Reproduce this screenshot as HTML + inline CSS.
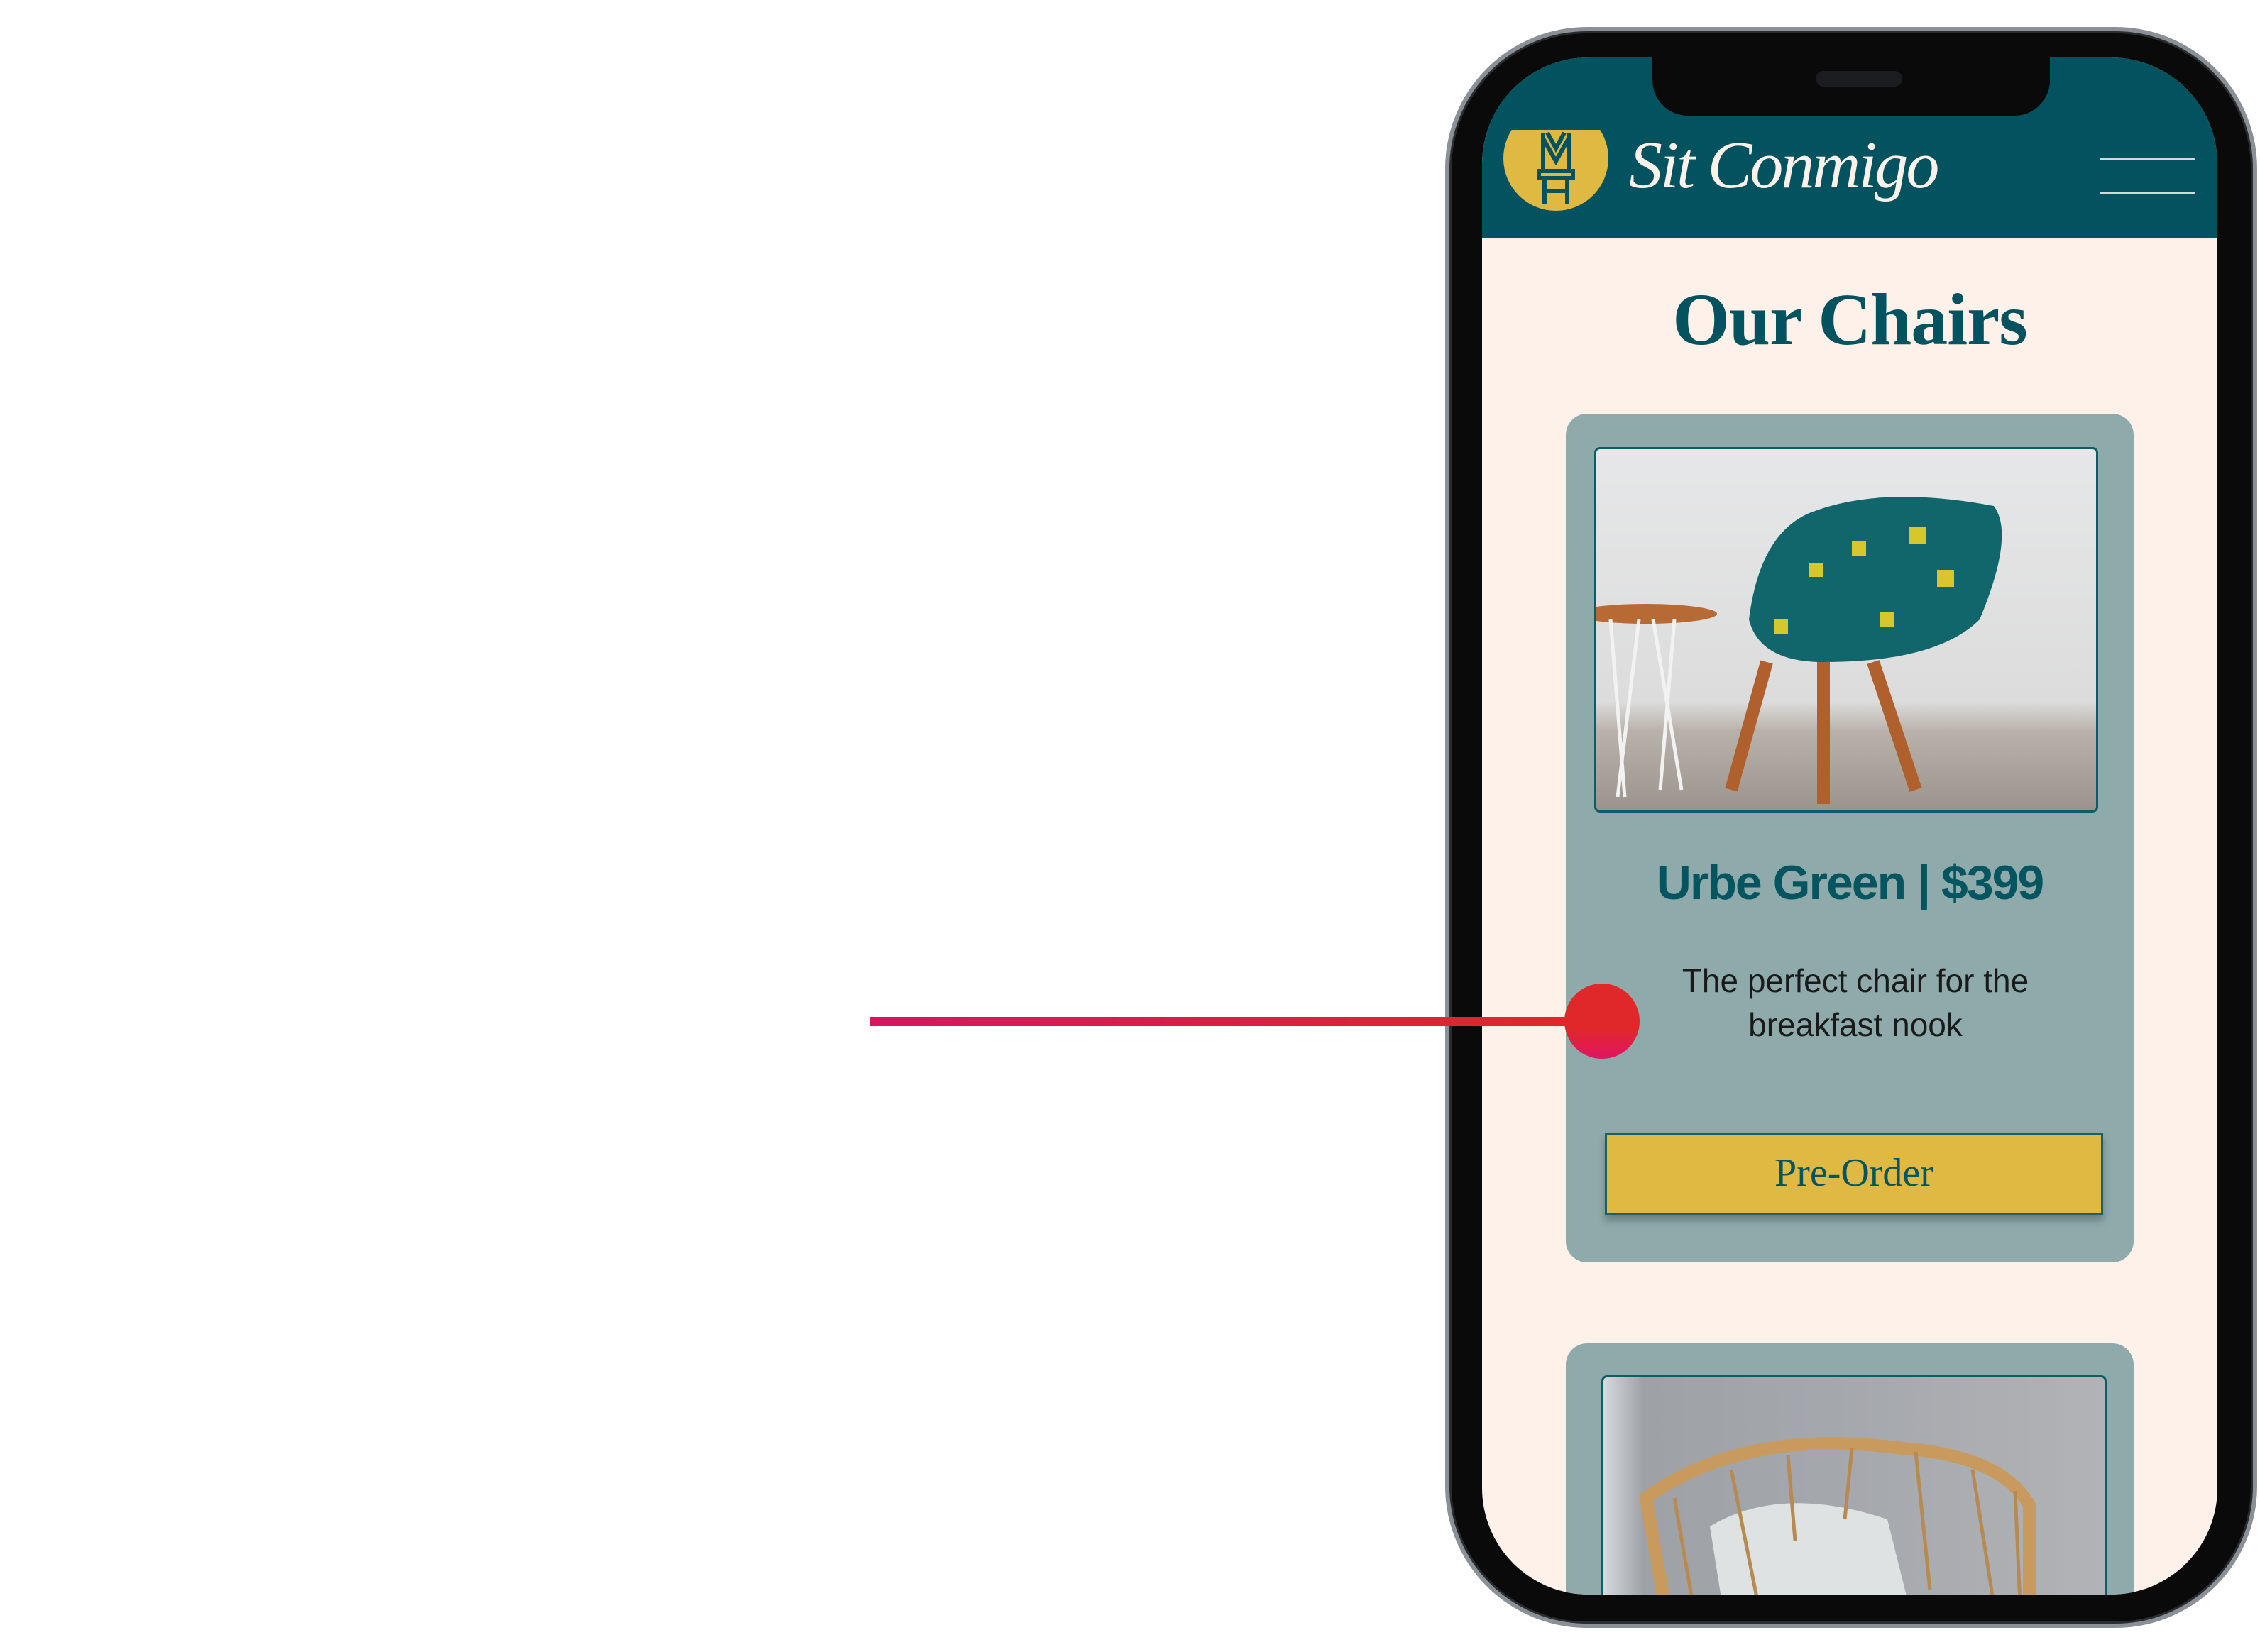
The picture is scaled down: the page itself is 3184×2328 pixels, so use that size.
<!DOCTYPE html>
<html style="overflow:hidden"><head><meta charset="utf-8"><style>
*{margin:0;padding:0;box-sizing:border-box}
html,body{width:3184px;height:2328px;overflow:hidden}
body{background:#fff;position:relative;font-family:"Liberation Sans",sans-serif}
.abs{position:absolute}
#phone{left:2036px;top:38px;width:1144px;height:2256px;border-radius:200px;background:#0a0a0b;border:6px solid #8a9096;box-shadow:inset 0 0 0 3px #2a2d30}
#screen{left:2088px;top:81px;width:1036px;height:2166px;border-radius:150px;background:#fdf1e9;overflow:hidden}
#header{left:0;top:0;width:1036px;height:255px;background:#03525f}
#notch{left:240px;top:-5px;width:560px;height:87px;background:#0a0a0b;border-radius:0 0 50px 50px}
#speaker{left:230px;top:24px;width:122px;height:22px;background:#1c1d20;border-radius:11px}
.logo{left:30px;top:102px;width:148px;height:114px;overflow:hidden}
.brand{left:207px;top:98px;font-family:"Liberation Serif",serif;font-style:italic;color:#fdf1e9;font-size:94px;letter-spacing:-3px}
.ham{left:870px;width:134px;height:3px;background:#cfdad9}
h1{position:absolute;left:0;width:1036px;top:310px;margin:0;text-align:center;font-family:"Liberation Serif",serif;font-weight:bold;font-size:104px;color:#03525f;letter-spacing:-1px}
.card{left:118px;width:800px;background:#8eaaab;border-radius:30px;overflow:hidden}
.img{border:3px solid #0e5d66;border-radius:8px;overflow:hidden}
.title{left:0;width:800px;text-align:center;font-weight:bold;font-size:68px;color:#055560;letter-spacing:-2px}
.desc{left:0;width:800px;text-align:center;font-size:46px;line-height:62px;color:#1a1a1a;padding-left:16px}
.btn{left:55px;top:1013px;width:702px;height:116px;background:#e0b942;border:3px solid #1c6066;box-shadow:0 8px 10px rgba(0,0,0,.25);text-align:center;font-family:"Liberation Serif",serif;font-size:56px;line-height:108px;color:#055560}
</style></head><body>
<div id="phone" class="abs"></div>
<div id="screen" class="abs">
 <div id="header" class="abs">
  <div class="logo abs"><svg width="148" height="114" viewBox="0 0 148 114"><ellipse cx="74" cy="40" rx="74" ry="74" fill="#e0b942"/><g fill="none" stroke="#03525f" stroke-width="6"><path d="M56 12 L74 44 L92 12 M62 4 L74 26 L86 4 M56 4 V58 M92 4 V58"/><rect x="50" y="58" width="48" height="10"/><path d="M58 68 V104 M90 68 V104 M58 86 H90"/></g></svg></div>
  <div class="brand abs">Sit Conmigo</div>
  <div class="ham abs" style="top:142px"></div>
  <div class="ham abs" style="top:190px"></div>
 </div>
 <div id="notch" class="abs"><div id="speaker" class="abs"></div></div>
 <h1>Our Chairs</h1>
 <div class="card abs" style="top:502px;height:1196px">
  <div class="img abs" style="left:40px;top:47px;width:710px;height:515px;background:linear-gradient(180deg,#e6e7e8 0%,#dcdcdc 70%,#b9b2aa 78%,#9a948d 100%)">
   <svg width="704" height="509" viewBox="0 0 704 509"><ellipse cx="70" cy="232" rx="100" ry="14" fill="#b86a35"/><g stroke="#f2f2f2" stroke-width="5" fill="none"><path d="M20 240 L40 490 M60 240 L30 490 M80 240 L120 480 M110 240 L90 480"/></g><g stroke="#b0602c" stroke-width="18"><path d="M240 300 L190 480 M390 300 L450 480 M320 300 L320 500"/></g><path d="M215 240 Q230 120 300 90 Q400 50 560 80 Q590 120 540 240 Q480 300 320 300 Q230 300 215 240Z" fill="#10666b"/><g fill="#d8c72c"><rect x="300" y="160" width="20" height="20"/><rect x="360" y="130" width="20" height="20"/><rect x="250" y="240" width="20" height="20"/><rect x="440" y="110" width="24" height="24"/><rect x="480" y="170" width="24" height="24"/><rect x="400" y="230" width="20" height="20"/></g></svg>
  </div>
  <div class="title abs" style="top:622px">Urbe Green | $399</div>
  <div class="desc abs" style="top:768px">The perfect chair for the<br>breakfast nook</div>
  <div class="btn abs">Pre-Order</div>
 </div>
 <div class="card abs" style="top:1812px;height:400px">
  <div class="img abs" style="left:50px;top:45px;width:712px;height:400px;background:linear-gradient(90deg,#d6d9dc 0,#9ea2a7 8%,#a5a8ad 50%,#b1b3b6 100%)">
   <svg width="706" height="400" viewBox="0 0 706 400"><path d="M60 170 Q200 70 420 100 Q560 110 600 180 L600 400 L100 400Z" fill="none" stroke="#c99a5e" stroke-width="18"/><path d="M150 210 Q250 150 400 200 L430 320 L520 330 L540 400 L180 400Z" fill="#dfe2e2"/><g stroke="#b78a52" stroke-width="5" fill="none"><path d="M100 170 L140 400 M180 130 L220 330 M260 110 L270 230 M350 100 L340 200 M440 105 L460 300 M520 130 L550 320 M580 160 L590 390"/></g></svg>
  </div>
 </div>
</div>
<div class="abs" style="left:1226px;top:1433px;width:1031px;height:13px;background:linear-gradient(90deg,#d8155f,#e0282a)"></div>
<div class="abs" style="left:2204px;top:1386px;width:106px;height:106px;border-radius:50%;background:linear-gradient(180deg,#e0282a 0%,#e0282a 60%,#e01563 100%)"></div>
</body></html>
